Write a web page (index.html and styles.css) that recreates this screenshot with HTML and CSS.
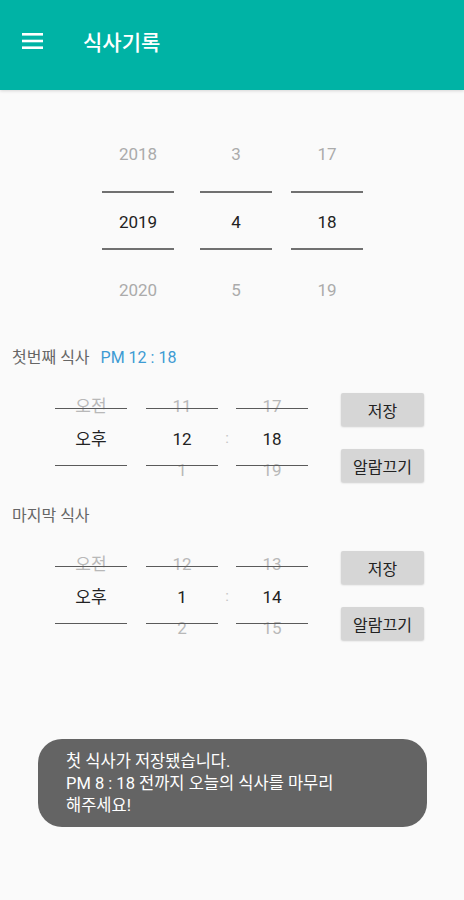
FILE: index.html
```html
<!DOCTYPE html>
<html lang="ko">
<head>
  <meta charset="UTF-8">
  <title>식사기록</title>
  <link rel="stylesheet" href="styles.css">
</head>
<body>

  <header class="appbar">
    <svg class="menu" width="21" height="16" viewBox="0 0 21 16">
      <rect x="0" y="0" width="21" height="2.6" fill="#fff"/>
      <rect x="0" y="6.7" width="21" height="2.6" fill="#fff"/>
      <rect x="0" y="13.4" width="21" height="2.6" fill="#fff"/>
    </svg>
    <h1>식사기록</h1>
  </header>

  <main>
    <!-- date picker -->
    <div class="date-picker">
      <div class="wheel wheel-year">
        <div class="item dim">2018</div>
        <div class="item">2019</div>
        <div class="item dim">2020</div>
      </div>
      <div class="wheel wheel-month">
        <div class="item dim">3</div>
        <div class="item">4</div>
        <div class="item dim">5</div>
      </div>
      <div class="wheel wheel-day">
        <div class="item dim">17</div>
        <div class="item">18</div>
        <div class="item dim">19</div>
      </div>
    </div>

    <!-- first meal -->
    <p class="section-label">첫번째 식사<span class="saved-time">PM 12 : 18</span></p>
    <div class="meal-row">
      <div class="time-picker">
        <div class="tcol tcol-ampm">
          <div class="titem dim">오전</div>
          <div class="titem">오후</div>
          <div class="titem dim"></div>
        </div>
        <div class="tcol">
          <div class="titem dim">11</div>
          <div class="titem">12</div>
          <div class="titem dim">1</div>
        </div>
        <div class="colon">:</div>
        <div class="tcol">
          <div class="titem dim">17</div>
          <div class="titem">18</div>
          <div class="titem dim">19</div>
        </div>
      </div>
      <div class="actions">
        <button class="btn">저장</button>
        <button class="btn">알람끄기</button>
      </div>
    </div>

    <!-- last meal -->
    <p class="section-label">마지막 식사</p>
    <div class="meal-row">
      <div class="time-picker">
        <div class="tcol tcol-ampm">
          <div class="titem dim">오전</div>
          <div class="titem">오후</div>
          <div class="titem dim"></div>
        </div>
        <div class="tcol">
          <div class="titem dim">12</div>
          <div class="titem">1</div>
          <div class="titem dim">2</div>
        </div>
        <div class="colon">:</div>
        <div class="tcol">
          <div class="titem dim">13</div>
          <div class="titem">14</div>
          <div class="titem dim">15</div>
        </div>
      </div>
      <div class="actions">
        <button class="btn">저장</button>
        <button class="btn">알람끄기</button>
      </div>
    </div>
  </main>

  <div class="toast">
    첫 식사가 저장됐습니다.<br>
    PM 8 : 18 전까지 오늘의 식사를 마무리<br>
    해주세요!
  </div>

</body>
</html>
```

FILE: styles.css
```css
:root {
  --teal: #00b3a5;
  --bg: #fafafa;
  --text-dark: #222222;
  --text-dim: #ababab;
  --label: #666666;
  --blue: #3d9bd3;
  --font: Roboto, "Noto Sans CJK KR", sans-serif;
}
*, *::before, *::after {
  box-sizing: border-box;
  margin: 0;
  padding: 0;
}
html, body {
  height: 100%;
}
body {
  font-family: var(--font);
  background: var(--bg);
  color: var(--text-dark);
  position: relative;
  overflow: hidden;
}

/* app bar */
.appbar {
  height: 90px;
  background: var(--teal);
  display: flex;
  align-items: center;
  padding: 0 0 8px 22px;
  box-shadow: 0 1px 3px rgba(0,0,0,0.15);
}
.appbar .menu {
  flex: none;
}
.appbar h1 {
  margin-left: 40px;
  font-size: 21px;
  font-weight: 500;
  color: #fff;
}

/* date picker */
.date-picker {
  display: flex;
  margin-top: 30px;
  padding-left: 102px;
}
.wheel {
  position: relative;
  width: 72px;
  text-align: center;
}
.wheel-month {
  margin-left: 26px;
}
.wheel-day {
  margin-left: 19px;
}
.wheel::before,
.wheel::after {
  content: "";
  position: absolute;
  left: 0;
  right: 0;
  height: 2px;
  background: #707070;
}
.wheel::before { top: 71px; }
.wheel::after { top: 128px; }
.wheel .item {
  height: 68px;
  line-height: 68px;
  font-size: 17px;
  color: var(--text-dark);
}
.wheel .item.dim {
  color: var(--text-dim);
}

/* section label */
.section-label {
  margin-top: 24px;
  padding-left: 12px;
  height: 20px;
  line-height: 20px;
  font-size: 16px;
  color: var(--label);
}
.saved-time {
  margin-left: 11px;
  color: var(--blue);
  font-size: 16px;
}

/* meal row */
.meal-row {
  display: flex;
  margin-top: 25px;
  padding-left: 55px;
  height: 89px;
}
.time-picker {
  display: flex;
  margin-top: 5px;
  height: 80px;
}
.tcol {
  position: relative;
  width: 72px;
  height: 80px;
  text-align: center;
}
.tcol-ampm {
  margin-right: 19px;
}
.tcol::before,
.tcol::after {
  content: "";
  position: absolute;
  left: 0;
  right: 0;
  height: 1.5px;
  background: #5a5a5a;
  z-index: 1;
}
.tcol::before { top: 9.5px; }
.tcol::after { top: 66.5px; }
.titem {
  height: 33px;
  line-height: 33px;
  font-size: 17px;
  color: var(--text-dark);
}
.titem:first-child {
  margin-top: -8px;
}
.titem:last-child {
  margin-top: -2px;
}
.titem.dim {
  color: #b8b8b8;
}
.colon {
  width: 18px;
  text-align: center;
  line-height: 80px;
  font-size: 15px;
  color: #c4c4c4;
}
.actions {
  margin-left: 33px;
  display: flex;
  flex-direction: column;
  gap: 23px;
}
.btn {
  width: 83px;
  height: 33px;
  border: none;
  border-radius: 2px;
  background: #d6d6d6;
  box-shadow: 0 1px 2px rgba(0,0,0,0.18);
  font-family: var(--font);
  font-size: 16px;
  color: var(--text-dark);
}

/* toast */
.toast {
  position: absolute;
  left: 38px;
  top: 739px;
  width: 389px;
  height: 88px;
  padding: 12px 0 0 28px;
  border-radius: 24px;
  background: #646464;
  color: #fff;
  font-size: 16.5px;
  line-height: 22px;
}
```
